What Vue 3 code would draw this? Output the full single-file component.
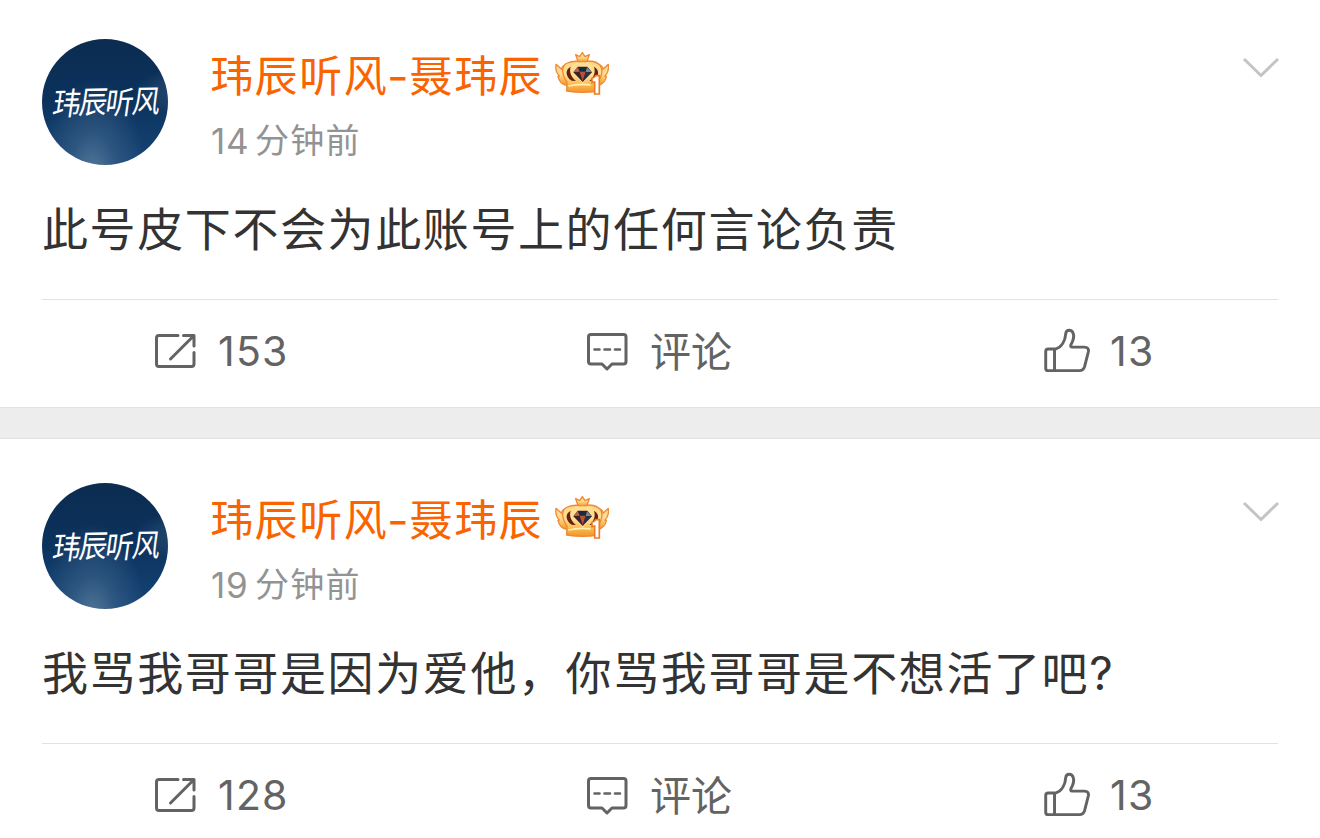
<template>
  <main class="feed">
    <article v-for="post in posts" :key="post.id" class="post">
      <header class="head">
        <div class="avatar">
          <span class="avatar-text"><i v-for="c in '玮辰听风'" :key="c">{{ c }}</i></span>
        </div>
        <div class="meta">
          <div class="name">
            <span>玮辰听风</span><span class="dash">-</span><span>聂玮辰</span>
            <svg class="crown" viewBox="30 20 162 132">
              <defs>
                <linearGradient id="gold" x1="0" y1="0" x2="0" y2="1">
                  <stop offset="0" stop-color="#ffd584" />
                  <stop offset=".45" stop-color="#ffdf98" />
                  <stop offset=".75" stop-color="#fbb950" />
                  <stop offset="1" stop-color="#f5922e" />
                </linearGradient>
              </defs>
              <g fill="url(#gold)" stroke="#ee8a35" stroke-width="4" stroke-linejoin="round">
                <path d="M64 56C54 60 50 66 50 72L33 57C31 71 34 83 43 92L39 93C42 107 52 118 65 120L74 100Z" />
                <path d="M160 56C170 60 174 66 174 72L190 57C192 71 189 83 180 92L184 93C182 107 172 118 159 120L150 100Z" />
                <path d="M66 110C50 88 47 61 67 53C86 44 98 49 112 48C128 47 142 44 158 54C176 64 174 89 158 110L160 137Q113 145 65 137Z" />
                <path d="M99 48L92 28L104 34L112 22L120 34L133 28L126 48Q112 53 99 48Z" />
              </g>
              <path d="M77 64C58 74 63 95 80 106L93 107C78 94 72 80 77 64Z" fill="#66200f" />
              <path d="M147 64C166 74 161 95 146 106L133 107C148 94 152 80 147 64Z" fill="#66200f" />
              <path d="M83 58Q111 44 141 58Q146 83 113 114Q77 82 83 58Z" fill="#ffdf94" />
              <path d="M98 64H127L141 81L113 110L85 81Z" fill="#3b2226" />
              <path d="M98 64L104 79L86 80Z" fill="#b3694c" />
              <path d="M104 79H122L113 107Z" fill="#b8503a" />
              <path d="M101 67H124L119 77H105Z" fill="#172d3d" />
              <path d="M126 66L139 80H122Z" fill="#6f8f91" />
              <path d="M122 81H137L115 104Z" fill="#23354c" />
              <path d="M70 122Q105 114 137 119" fill="none" stroke="#fff1ae" stroke-width="5" />
              <path d="M141 99C147 97 150 94 152 91H163V146H149V110L141 112Z" fill="#fff" stroke="#ef7c22" stroke-width="5" />
            </svg>
          </div>
          <div class="time"><b>{{ post.minutes }}</b><span>分钟前</span></div>
        </div>
        <svg class="more" viewBox="0 0 38 24">
          <path d="M2 3L19 19.5L36 3" />
        </svg>
      </header>
      <p class="body">{{ post.text }}</p>
      <footer class="actions">
        <div class="action repost">
          <svg width="42" height="44" viewBox="0 0 42 44">
            <path d="M23 5.500H4Q1.500 5.500 1.500 8V34Q1.500 36.500 4 36.500H36.500Q39 36.500 39 34V22.500M28.500 5.500H39V16M38 6.500L15.500 29" />
          </svg>
          <span class="count">{{ post.reposts }}</span>
        </div>
        <div class="action comment">
          <svg width="42" height="44" viewBox="0 0 42 44">
            <path d="M4 4.500H36.500Q39 4.500 39 7V31.500Q39 34 36.500 34H25L20 39L15 34H4Q1.500 34 1.500 31.500V7Q1.500 4.500 4 4.500Z" />
            <path class="thin" d="M7.500 19.500H12.500M17.500 19.500H23M28 19.500H33" />
          </svg>
          <span>评论</span>
        </div>
        <div class="action like">
          <svg width="47" height="47" viewBox="0 0 47.500 48">
            <path d="M11.500 21.500H4Q1.500 21.500 1.500 24V41Q1.500 43.500 4 43.500H36Q40 43.500 41.200 39.500L45 24.500Q46 19.500 41 19.500H28.500C27 19.500 26.700 18.500 27.300 17C30 12 30.500 8 29.600 5.500C28 1 22.500 1.500 22 5.500C21.500 12 18.500 19.500 11.500 21.500ZM10.500 22V43" />
          </svg>
          <span class="count">{{ post.likes }}</span>
        </div>
      </footer>
    </article>
  </main>
</template>

<script setup>
  const posts = [
    { id: 1, minutes: 14, text: '此号皮下不会为此账号上的任何言论负责', reposts: 153, likes: 13 },
    { id: 2, minutes: 19, text: '我骂我哥哥是因为爱他，你骂我哥哥是不想活了吧?', reposts: 128, likes: 13 },
  ];
</script>

<style>
  body {
    margin: 0;
    background: #fff;
    overflow: hidden;
  }
</style>

<style scoped>
  .feed {
    width: 1320px;
    height: 838px;
    overflow: hidden;
    background: #fff;
    font-family: Inter, 'Noto Sans CJK SC', sans-serif;
  }

  .post {
    box-sizing: border-box;
    height: 408px;
    padding-top: 39px;
    border-bottom: 1px solid #e2e2e2;
  }

  .post + .post {
    height: 444px;
    margin-top: 30px;
    padding-top: 44px;
    border-top: 1px solid #e2e2e2;
    background: #fff;
    box-shadow: 0 -30px #ededed;
  }

  .head {
    display: flex;
    height: 126px;
    padding: 0 40px 0 42px;
  }

  .avatar {
    display: flex;
    align-items: center;
    justify-content: center;
    width: 126px;
    height: 126px;
    border-radius: 50%;
    background:
      radial-gradient(ellipse at 40% 108%, #55789a 0, rgba(62, 100, 138, 0.6) 22%, transparent 50%),
      radial-gradient(ellipse at 106% 42%, #21466c 0, rgba(30, 68, 106, 0.7) 12%, transparent 22%),
      linear-gradient(180deg, #0c2c50, #0b315c 45%, #154576);
  }

  .avatar-text {
    display: flex;
    color: #fff;
    font-size: 28px;
    font-weight: 400;
    line-height: 40px;
    transform: translate(1px, 0) skew(-8deg, -1deg) scaleY(1.120);
  }

  .avatar-text i {
    width: 26.500px;
    font-style: normal;
  }

  .avatar-text i:nth-child(odd) {
    padding-top: 1px;
  }

  .meta {
    flex: 1;
    padding: 7px 0 0 42px;
  }

  .name {
    display: flex;
    align-items: center;
    height: 60px;
    color: #f96400;
    font-size: 43px;
    line-height: 60px;
    letter-spacing: 1.600px;
  }

  .dash {
    width: 21px;
    transform: scaleX(1.100);
  }

  .crown {
    width: 54px;
    height: 44px;
    margin: -5px 0 0 12px;
  }

  .time {
    display: flex;
    height: 50px;
    margin-top: 10px;
    padding-left: 1px;
    color: #939393;
    font-size: 34px;
    line-height: 50px;
  }

  .time b {
    width: 37px;
    font-size: 35px;
    font-weight: 400;
    letter-spacing: 0.800px;
  }

  .time span {
    margin-left: 7px;
    letter-spacing: 1.200px;
  }

  .more {
    width: 38px;
    height: 24px;
    margin-top: 17px;
    fill: none;
    stroke: #c4c4c4;
    stroke-width: 3;
  }

  .body {
    height: 70px;
    margin: 29px 42px 35px;
    color: #333;
    font-size: 46px;
    line-height: 70px;
    letter-spacing: 1.600px;
    white-space: nowrap;
  }

  .actions {
    display: grid;
    grid-template-columns: repeat(3, 440px);
    height: 107px;
    background: linear-gradient(#e2e2e2, #e2e2e2) 42px 0 / 1236px 1px no-repeat;
  }

  .action {
    display: flex;
    box-sizing: border-box;
    align-items: center;
    gap: 21px;
    height: 105px;
    color: #636363;
    font-size: 41px;
    line-height: 60px;
  }

  .repost {
    padding-left: 155px;
  }

  .comment {
    padding-left: 147px;
  }

  .like {
    gap: 19px;
    padding-left: 164px;
  }

  .count {
    margin-top: -1px;
    letter-spacing: 1.200px;
  }

  .action svg {
    fill: none;
    stroke: #636363;
    stroke-width: 3;
    stroke-linecap: round;
    stroke-linejoin: round;
  }

  .action .thin {
    stroke-width: 2.600;
  }
</style>
